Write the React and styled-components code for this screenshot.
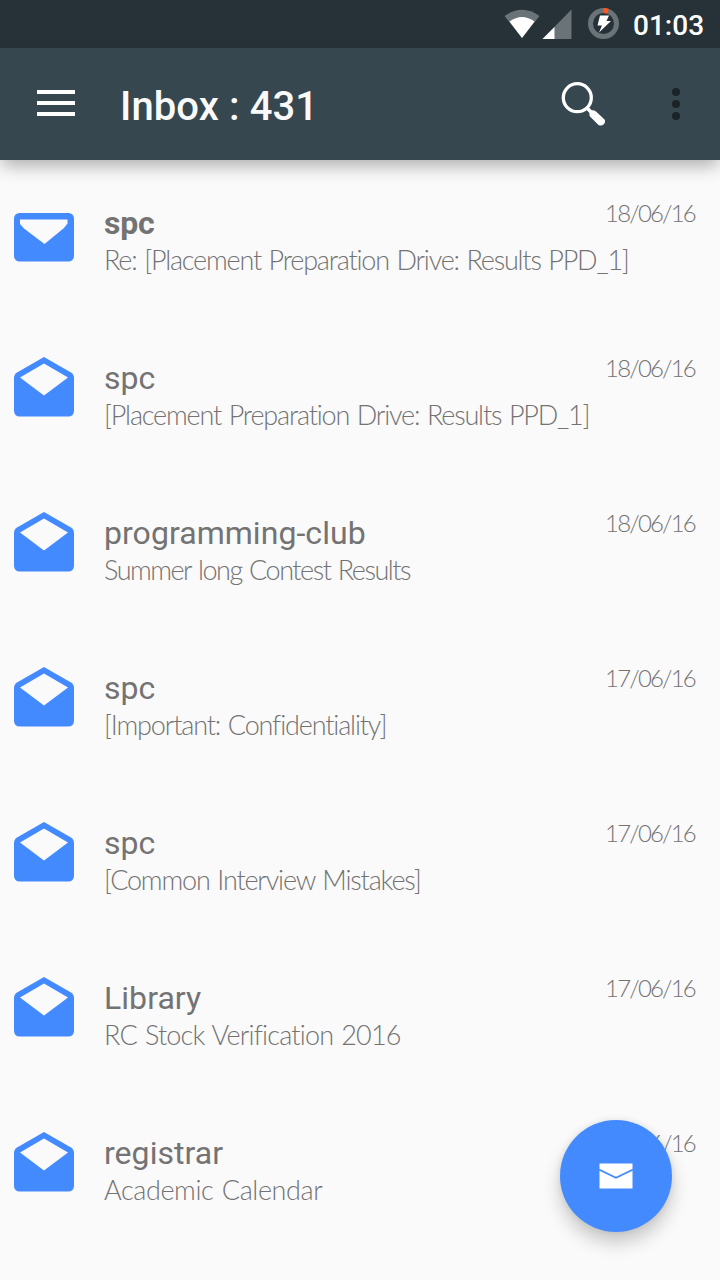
import React from 'react';
import styled, { createGlobalStyle } from 'styled-components';

const GlobalStyle = createGlobalStyle`
  * { box-sizing: border-box; }
  body { margin: 0; background: #fafafa; font-family: Roboto, "Liberation Sans", sans-serif; }
`;

const Screen = styled.div`
  position: relative;
  width: 720px;
  height: 1280px;
  overflow: hidden;
  background: #fafafa;
  display: flex;
  flex-direction: column;
`;

const StatusBar = styled.div`
  height: 48px;
  flex: none;
  background: #263238;
  display: flex;
  align-items: center;
  justify-content: flex-end;
  padding-right: 16px;
`;

const StatusIcons = styled.svg`
  width: 120px;
  height: 48px;
  margin-right: 9px;
`;

const Clock = styled.span`
  color: #fff;
  font-size: 28px;
  font-weight: 500;
  line-height: 48px;
  padding-top: 3px;
  width: 71px;
  white-space: nowrap;
`;

const AppBar = styled.header`
  height: 112px;
  flex: none;
  background: #37474f;
  display: flex;
  align-items: center;
  box-shadow: 0 8px 16px -2px rgba(0, 0, 0, 0.3);
  padding: 0 36px 0 37px;
`;

const MenuIcon = styled.div`
  width: 38px;
  height: 26px;
  display: flex;
  flex-direction: column;
  justify-content: space-between;
  margin-bottom: 2px;
`;

const MenuLine = styled.span`
  height: 4px;
  background: #fff;
`;

const Title = styled.h1`
  margin: 0 0 0 45px;
  padding-top: 5px;
  flex: 1;
  color: #fafafa;
  font-size: 40px;
  font-weight: 500;
  line-height: 48px;
  letter-spacing: 0.1px;
  white-space: nowrap;
`;

const SearchIcon = styled.svg`
  width: 48px;
  height: 48px;
  margin-right: 60px;
`;

const MoreIcon = styled.svg`
  width: 16px;
  height: 36px;
`;

const MailList = styled.main`
  flex: 1;
  overflow: hidden;
`;

const MailRow = styled.article`
  height: 155px;
  display: flex;
  align-items: flex-start;
  padding: 36px 24px 0 14px;
`;

const Envelope = styled.svg`
  width: 60px;
  height: 60px;
  flex: none;
  margin: ${(p) => (p.$unread ? 11 : 6)}px 30px 0 0;
`;

const MailBody = styled.div`
  flex: 1;
  min-width: 0;
`;

const TopLine = styled.div`
  display: flex;
  justify-content: space-between;
  align-items: flex-start;
  height: 46px;
`;

const Sender = styled.span`
  color: #737373;
  font-size: 32px;
  line-height: 38px;
  padding-top: 8px;
  font-weight: ${(p) => (p.$unread ? 700 : 400)};
  letter-spacing: ${(p) => (p.$unread ? -0.2 : 0.05)}px;
`;

const MailDate = styled.time`
  color: #737373;
  font-family: Lato, "Liberation Sans", sans-serif;
  font-weight: 300;
  font-size: 24px;
  line-height: 34px;
  letter-spacing: -1.8px;
  padding-right: 1px;
  white-space: nowrap;
`;

const Subject = styled.div`
  color: #737373;
  font-family: Lato, "Liberation Sans", sans-serif;
  font-weight: 300;
  font-size: 27px;
  line-height: 36px;
  white-space: nowrap;
  font-variant-ligatures: none;
  word-spacing: 1.5px;
  letter-spacing: ${(p) => p.$spacing}px;
`;

const ComposeButton = styled.button`
  position: absolute;
  left: 560px;
  top: 1120px;
  width: 112px;
  height: 112px;
  border: 0;
  padding: 0;
  border-radius: 50%;
  background: #448aff;
  box-shadow: 0 11px 18px rgba(0, 0, 0, 0.2), 0 0 6px rgba(0, 0, 0, 0.09);
  display: flex;
  align-items: center;
  justify-content: center;
`;

const ComposeIcon = styled.svg`
  width: 34px;
  height: 26px;
  margin-right: 1px;
`;

const mails = [
  { sender: 'spc', subject: 'Re: [Placement Preparation Drive: Results PPD_1]', date: '18/06/16', unread: true, spacing: -1.2 },
  { sender: 'spc', subject: '[Placement Preparation Drive: Results PPD_1]', date: '18/06/16', spacing: -1.18 },
  { sender: 'programming-club', subject: 'Summer long Contest Results', date: '18/06/16', spacing: -1.48 },
  { sender: 'spc', subject: '[Important: Confidentiality]', date: '17/06/16', spacing: -1.15 },
  { sender: 'spc', subject: '[Common Interview Mistakes]', date: '17/06/16', spacing: -1.17 },
  { sender: 'Library', subject: 'RC Stock Verification 2016', date: '17/06/16', spacing: -0.82 },
  { sender: 'registrar', subject: 'Academic Calendar', date: '17/06/16', spacing: -0.4 },
];

function MailIcon({ unread }) {
  return (
    <Envelope viewBox="0 0 60 60" $unread={unread}>
      {unread ? (
        <>
          <rect x="0" y="6" width="60" height="48.500" rx="5.500" fill="#448aff" />
          <path d="M6 12.500H53.500V16.500L50 21L30.500 37L10 21.500L6 17Z" fill="#fafafa" />
        </>
      ) : (
        <>
          <path d="M30 0L57 15.500Q60 17.500 60 21V53.500Q60 59.500 54 59.500H6Q0 59.500 0 53.500V21Q0 17.500 3 15.500Z" fill="#448aff" />
          <path d="M30 6.500L54 20.500L30 38.500L6 20.500Z" fill="#fafafa" />
        </>
      )}
    </Envelope>
  );
}

export default function App() {
  return (
    <Screen>
      <GlobalStyle />
      <StatusBar>
        <StatusIcons viewBox="504 0 120 48">
          <path d="M504.500 16Q522 3.500 539.500 16L522 38Z" fill="#697378" />
          <path d="M509.500 21.500Q522 12.500 534.500 21.500L522 38Z" fill="#fff" />
          <path d="M571.500 9.500V39H542.500Z" fill="#697378" />
          <path d="M554.500 27V39H542.500Z" fill="#fff" />
          <circle cx="603.500" cy="23.500" r="13" fill="none" stroke="#697378" strokeWidth="5" />
          <path d="M603.500 10.500A13 13 0 0 1 608 11.300" fill="none" stroke="#ff5722" strokeWidth="5" />
          <path d="M600 15.500H609L606.500 21H611L599 32.500L602 25.500H597.500Z" fill="#fff" />
        </StatusIcons>
        <Clock>01:03</Clock>
      </StatusBar>
      <AppBar>
        <MenuIcon>
          <MenuLine />
          <MenuLine />
          <MenuLine />
        </MenuIcon>
        <Title>Inbox : 431</Title>
        <SearchIcon viewBox="560 80 48 48">
          <circle cx="577.300" cy="97.700" r="14" fill="none" stroke="#fff" strokeWidth="3.300" />
          <path d="M586.500 107.500L592 113" stroke="#fff" strokeWidth="3.500" />
          <path d="M590.500 110.500Q593.500 109.500 596 111.500L604.500 119.500Q606 122 603.800 124.200Q601.500 126.500 598.500 125L590 116.500Q588.500 114 590.500 110.500Z" fill="#fff" />
        </SearchIcon>
        <MoreIcon viewBox="0 0 16 36">
          <circle cx="8" cy="6" r="4" fill="#1b2327" />
          <circle cx="8" cy="18" r="4" fill="#1b2327" />
          <circle cx="8" cy="30" r="4" fill="#1b2327" />
        </MoreIcon>
      </AppBar>
      <MailList>
        {mails.map((mail, i) => (
          <MailRow key={i}>
            <MailIcon unread={mail.unread} />
            <MailBody>
              <TopLine>
                <Sender $unread={mail.unread}>{mail.sender}</Sender>
                <MailDate>{mail.date}</MailDate>
              </TopLine>
              <Subject $spacing={mail.spacing}>{mail.subject}</Subject>
            </MailBody>
          </MailRow>
        ))}
      </MailList>
      <ComposeButton aria-label="Compose">
        <ComposeIcon viewBox="0 0 34 26">
          <path d="M0.500 0.500H33.500V25.500H0.500Z" fill="#fff" />
          <path d="M0 6.500L17 14.800L34 6.500" fill="none" stroke="#448aff" strokeWidth="1.800" />
        </ComposeIcon>
      </ComposeButton>
    </Screen>
  );
}
